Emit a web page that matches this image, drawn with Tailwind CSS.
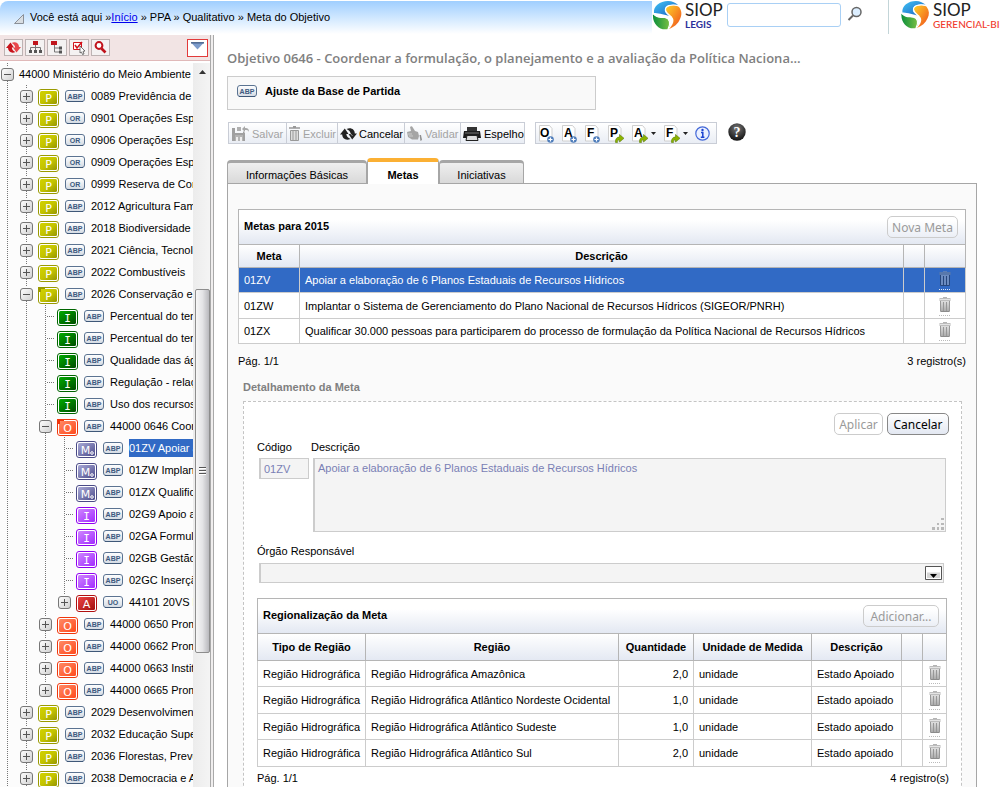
<!DOCTYPE html>
<html lang="pt-BR">
<head>
<meta charset="utf-8">
<title>SIOP - Meta do Objetivo</title>
<script src="https://cdn.jsdelivr.net/npm/@tailwindcss/browser@4"></script>
</head>
<body class="flex h-screen flex-col overflow-hidden bg-white font-['Liberation_Sans',Arial,sans-serif] text-[11px] leading-[14px] text-black">

<svg class="absolute size-0" aria-hidden="true">
  <defs>
    <linearGradient id="g-btn" x1="0" y1="0" x2="1" y2="1"><stop offset="0" stop-color="#fff"/><stop offset="1" stop-color="#cfcfcf"/></linearGradient>
    <linearGradient id="g-P" x1="0" y1="0" x2="1" y2="1"><stop offset="0" stop-color="#d2d200"/><stop offset=".5" stop-color="#c4c400"/><stop offset="1" stop-color="#969600"/></linearGradient>
    <linearGradient id="g-I" x1="0" y1="0" x2="1" y2="1"><stop offset="0" stop-color="#00ac00"/><stop offset="1" stop-color="#004c00"/></linearGradient>
    <linearGradient id="g-O" x1="0" y1="0" x2="1" y2="1"><stop offset="0" stop-color="#ff8a66"/><stop offset="1" stop-color="#ff4a1c"/></linearGradient>
    <linearGradient id="g-M" x1="0" y1="0" x2="1" y2="1"><stop offset="0" stop-color="#a9a9d6"/><stop offset="1" stop-color="#4d4d8c"/></linearGradient>
    <linearGradient id="g-V" x1="0" y1="0" x2="1" y2="1"><stop offset="0" stop-color="#cf86ff"/><stop offset="1" stop-color="#a12cff"/></linearGradient>
    <linearGradient id="g-A" x1="0" y1="0" x2="1" y2="1"><stop offset="0" stop-color="#ee4444"/><stop offset="1" stop-color="#a00d0d"/></linearGradient>
    <linearGradient id="g-badge" x1="0" y1="0" x2="0" y2="1"><stop offset="0" stop-color="#fff"/><stop offset="1" stop-color="#d3dae3"/></linearGradient>
    <linearGradient id="g-trash" x1="0" y1="0" x2="0" y2="1"><stop offset="0" stop-color="#dedede"/><stop offset="1" stop-color="#a6a6a6"/></linearGradient>
    <linearGradient id="g-blue" x1="0" y1="0" x2="1" y2="1"><stop offset="0" stop-color="#3fc3f5"/><stop offset="1" stop-color="#1b5fc0"/></linearGradient>
    <linearGradient id="g-green" x1="0" y1="0" x2="1" y2="0"><stop offset="0" stop-color="#0a8f3c"/><stop offset="1" stop-color="#7cc043"/></linearGradient>
    <linearGradient id="g-sun" x1="0" y1="0" x2="1" y2="1"><stop offset="0" stop-color="#ffd428"/><stop offset="1" stop-color="#ef4a1c"/></linearGradient>
    <radialGradient id="g-help" cx=".5" cy=".3" r=".7"><stop offset="0" stop-color="#777"/><stop offset="1" stop-color="#111"/></radialGradient>

    <symbol id="trash" viewBox="0 0 12 20">
      <path d="M4 1.500h4" stroke="#b4b4b4"/><path d="M0.500 2h11v3h-11z" fill="#bdbdbd"/><path d="M1 3.500h10" stroke="#e4e4e4"/>
      <path d="M1 5h10l-.5 11h-9z" fill="url(#g-trash)"/>
      <path d="M1.500 5v10.500M4.500 6v9M7.500 6v9M10.500 5v10.500" stroke="#979797"/><path d="M2 15.500h8" stroke="#8c8c8c"/>
      <path d="M0 19.500h12" stroke="#bbb" stroke-dasharray="1 1"/>
    </symbol>
    <symbol id="trash-sel" viewBox="0 0 12 20">
      <path d="M4 1.500h4" stroke="#5c7fb8"/><path d="M0.500 2h11v3h-11z" fill="#5878ab"/>
      <path d="M1 5h10l-.5 11h-9z" fill="#6c8cc0"/>
      <path d="M1.500 5v10.500M4.500 6v9M7.500 6v9M10.500 5v10.500M1.500 15.500h9" stroke="#27477d"/>
      <path d="M0 19.500h12" stroke="#dfe8f7" stroke-dasharray="1 1"/>
    </symbol>
    <symbol id="swirl" viewBox="0 0 30 30">
      <path d="M2 13C1 6 8 1 16 1c4 0 8 2 10 4-6-1-12 0-13 4-1 3 2 5 4 7-6-2-12-3-15-3z" fill="url(#g-blue)"/>
      <path d="M14 8c2-3 9-4 13-1 3 4 3 8 1 12-2 5-6 8-11 10 4-4 6-9 3-12-3-2-8-5-6-9z" fill="url(#g-sun)"/>
      <path d="M1 14c3 4 7 4 11 4 6 0 8 5 4 11C8 31 0 24 1 14z" fill="url(#g-green)"/>
      <path d="M26 5.500C19 4 13 6 13.500 10c.5 3 4 5 6 7" stroke="#fff" stroke-width="1.200" fill="none"/>
      <path d="M1 13.500c4 4 8 3 12 4 5 1 6 6 3 11.500" stroke="#fff" stroke-width="1.200" fill="none"/>
    </symbol>
    <symbol id="page" viewBox="0 0 16 19">
      <path d="M1.500 1.500h10l2.500 3v12.500h-12.500z" fill="#fff" stroke="#cfcfcf"/>
    </symbol>
    <symbol id="add" viewBox="0 0 7 7"><circle cx="3.500" cy="3.500" r="3.300" fill="#4d7cba"/><path d="M3.500 1.500v4M1.500 3.500h4" stroke="#fff" stroke-width="1.200"/></symbol>
    <symbol id="go" viewBox="0 0 9 9"><path d="M0.500 8.500C0 5 2 3 4.500 3V.5L9 4.300 4.500 8V6C3 6 2 6.500 2.500 8.500z" fill="#8cb400" stroke="#5f7f10" stroke-width=".6"/></symbol>
    <symbol id="badge" viewBox="0 0 20 12"><rect x=".5" y=".5" width="19" height="11" rx="2.500" fill="url(#g-badge)" stroke="#5b7391"/><path d="M2 11.500h16" stroke="#3f5878"/></symbol>
    <symbol id="badge-ABP" viewBox="0 0 20 12"><use href="#badge" width="20" height="12"/><text x="10" y="8.700" font-size="7" font-weight="bold" fill="#3d5a80" text-anchor="middle">ABP</text></symbol>
    <symbol id="badge-OR" viewBox="0 0 20 12"><use href="#badge" width="20" height="12"/><text x="10" y="8.700" font-size="7" font-weight="bold" fill="#3d5a80" text-anchor="middle">OR</text></symbol>
    <symbol id="badge-UO" viewBox="0 0 20 12"><use href="#badge" width="20" height="12"/><text x="10" y="8.700" font-size="7" font-weight="bold" fill="#3d5a80" text-anchor="middle">UO</text></symbol>
  </defs>
</svg>

<header class="flex h-[35px] shrink-0">
  <nav class="mt-px flex h-[33px] flex-1 items-center rounded-tl-lg bg-linear-to-b from-[#9fceff] to-white pb-[2px] pl-[14px]" aria-label="Você está aqui">
    <svg class="mt-1 mr-[6px] size-[10px]" viewBox="0 0 10 10"><path d="M.5 9.500L9.500.5v9z" fill="#d8dde2" stroke="#8b9098"/></svg>
    <span class="whitespace-pre">Você está aqui »<a href="#" class="text-[#0000ee] underline">Início</a> » PPA » Qualitativo » Meta do Objetivo</span>
  </nav>
  <div class="flex w-[351px] items-start">
    <svg class="size-[30px]" aria-hidden="true"><use href="#swirl"/></svg>
    <div class="ml-[3px] w-[42px] pt-px font-['Lato',sans-serif]">
      <p class="text-[17px] leading-[18px] text-[#222]">SIOP</p>
      <p class="text-[10px] leading-[10px] font-bold text-[#2a2f9b]">LEGIS</p>
    </div>
    <input type="text" aria-label="Pesquisar" class="mt-[3px] h-[24px] w-[114px] rounded-[3px] border border-[#a9d0f5] bg-white px-1">
    <button type="button" aria-label="Buscar" class="mt-[6px] ml-[6px]">
      <svg class="h-[17px] w-[16px]" viewBox="0 0 16 17"><circle cx="9.500" cy="6" r="4.500" fill="#dceeff" stroke="#666" stroke-width="1.500"/><path d="M6 9.500L1.500 14" stroke="#666" stroke-width="2"/></svg>
    </button>
    <div class="ml-[25px] h-[34px] w-px bg-[#c3d5d8]"></div>
    <svg class="ml-[11px] h-[29px] w-[30px]" aria-hidden="true"><use href="#swirl"/></svg>
    <div class="ml-[3px] pt-px font-['Lato',sans-serif]">
      <p class="text-[17px] leading-[18px] text-[#222]">SIOP</p>
      <p class="text-[10px] leading-[10px] font-medium whitespace-nowrap text-[#f03a2c]">GERENCIAL-BI</p>
    </div>
  </div>
</header>

<div class="flex min-h-0 flex-1">
  <aside class="flex w-[210px] shrink-0 flex-col">
    <div class="flex h-[26px] shrink-0 items-center gap-[2px] border-b border-[#e0b9b9] bg-[#f2e4e4] pr-[2px] pl-1">
      <button type="button" aria-label="Atualizar" class="flex h-[17px] w-[19px] items-center justify-center border border-[#bdb3b3] bg-[#f4f2f2]"><svg class="h-[13px] w-[15px]" viewBox="0 0 15 13"><path d="M0 7l4.500-5.500L8 6.500H5.800c.2 2 1.500 3.500 3.700 4.500-4 1.800-7.500-.5-7.500-4z" fill="#c8141c"/><path d="M15 6l-4.500 5.500L7 6.500h2.200C9 4.500 7.700 3 5.500 2 9.500.2 13 2.500 13 6z" fill="#e8474c"/></svg></button>
      <button type="button" aria-label="Expandir tudo" class="flex h-[17px] w-[20px] items-center justify-center border border-[#bdb3b3] bg-[#f4f2f2]"><svg class="h-[13px] w-[15px]" viewBox="0 0 15 13"><path d="M5 0h5v4H5z" fill="#c0141c"/><path d="M7.500 4v5M2.500 9V6.500h10V9" stroke="#777" fill="none"/><path d="M1 9h3v3H1zM6 9h3v3H6zM11 9h3v3h-3z" fill="#555"/></svg></button>
      <button type="button" aria-label="Recolher" class="flex h-[17px] w-[20px] items-center justify-center border border-[#bdb3b3] bg-[#f4f2f2]"><svg class="h-[13px] w-[15px]" viewBox="0 0 15 13"><path d="M1 0h6v4H1z" fill="#c0141c"/><path d="M4.500 4v7H9M4.500 7H9" stroke="#777" fill="none"/><path d="M9 5.500h3v3H9zM9 9.500h3v3H9z" fill="#555"/></svg></button>
      <button type="button" aria-label="Selecionar" class="flex h-[17px] w-[20px] items-center justify-center border border-[#bdb3b3] bg-[#f4f2f2]"><svg class="h-[14px] w-[15px]" viewBox="0 0 15 14"><path d="M1.500 1.500h8v7h-8z" fill="#fff" stroke="#d3141c"/><path d="M3 4l2 3 5-6" stroke="#d3141c" stroke-width="1.500" fill="none"/><path d="M8 5l5 5-2 .3 1 2.700-1.500.5-1-2.500L8 12z" fill="#fff" stroke="#555" stroke-width=".8"/></svg></button>
      <button type="button" aria-label="Procurar" class="flex h-[17px] w-[19px] items-center justify-center border border-[#bdb3b3] bg-[#f4f2f2]"><svg class="h-[13px] w-[13px]" viewBox="0 0 13 13"><circle cx="5" cy="4.500" r="3.400" fill="#fff" stroke="#c0141c" stroke-width="2"/><path d="M7.500 7.500l4 4" stroke="#c0141c" stroke-width="2.600"/></svg></button>
      <button type="button" aria-label="Opções" class="ml-auto flex h-[18px] w-[21px] items-center justify-center border border-[#e23a3a] bg-white"><svg class="mb-[3px] h-[8px] w-[13px]" viewBox="0 0 13 8"><path d="M.5 1h12L6.500 7.500z" fill="#7c9ccc"/><path d="M0 .8h13" stroke="#4b678f" stroke-width="1.500"/></svg></button>
    </div>
    <div class="mt-[2px] flex min-h-0 flex-1">
      <ul id="tree" class="w-[193px] shrink-0 overflow-hidden bg-[#fcfcfc]" aria-label="Estrutura do PPA"></ul>
      <div class="flex flex-1 flex-col items-center bg-linear-to-r from-[#ececec] to-[#f4f4f4] pl-px">
        <svg class="mt-[7px] h-[4px] w-[7px] shrink-0" viewBox="0 0 7 4"><path d="M3.500 0L7 4H0z" fill="#333"/></svg>
        <div class="mt-[215px] flex h-[364px] w-[15px] shrink-0 flex-col items-center justify-center gap-px rounded-[2px] border border-[#8d8d8d] bg-linear-to-r from-[#f7f7f7] via-[#e4e4e6] to-[#b9b9bd]">
          <div class="h-[2px] w-[7px] border-t border-[#555] bg-white"></div>
          <div class="h-[2px] w-[7px] border-t border-[#555] bg-white"></div>
          <div class="h-[2px] w-[7px] border-t border-[#555] bg-white"></div>
        </div>
      </div>
    </div>
  </aside>
  <div class="w-[4px] shrink-0 border-x border-[#a9a9a9] bg-[#f0eeee]"></div>

  <main class="flex min-w-0 flex-1 flex-col pr-[26px] pl-[13px]">
    <h1 class="mt-[15px] font-['Open_Sans',sans-serif] text-[13px] leading-4 font-semibold whitespace-nowrap text-[#808080]">Objetivo 0646 - Coordenar a formulação, o planejamento e a avaliação da Política Naciona...</h1>
    <div class="mt-[10px] flex h-[34px] w-[369px] shrink-0 items-center border border-[#ccc] bg-[#f9f9f9] pb-1 pl-[9px] font-bold">
      <svg class="h-[12px] w-[20px]"><use href="#badge-ABP"/></svg>
      <span class="ml-2">Ajuste da Base de Partida</span>
    </div>

    <div class="mt-[12px] flex h-[22px] shrink-0 items-center">
      <div class="ml-px flex h-[22px] w-[297px] divide-x divide-[#c9cdd6] border border-[#c9cdd6] bg-linear-to-b from-white to-[#e9edf4]">
        <button type="button" disabled class="flex w-[58px] items-center gap-[2px] pt-px pl-[3px] text-[#a3a3a3]"><svg class="h-[15px] w-[18px] shrink-0" viewBox="0 0 18 15"><path d="M0 2h3v5h8V5l2 2v8H0z" fill="#a0a0a0"/><path d="M3 9h8v6H3z" fill="#b4b4b4"/><path d="M4 11h2v4H4zM8 11h2v4H8z" fill="#eee"/><path d="M5 1h4v4H5z" fill="#b0b0b0"/><path d="M10 3l3-3v2c3 0 4 1 4 4-1-2-2-2-4-2v2z" fill="#a8a8a8"/></svg>Salvar</button>
        <button type="button" disabled class="flex w-[51px] items-center gap-[3px] pt-px pl-[2px] text-[#a3a3a3]"><svg class="h-[15px] w-[11px] shrink-0" viewBox="0 0 11 15"><path d="M4 .5h3M0 2h11" stroke="#999" stroke-width="1.500"/><path d="M1.500 4.500h8v10h-8z" fill="#ddd" stroke="#999"/><path d="M4 5v9M7 5v9" stroke="#999"/></svg>Excluir</button>
        <button type="button" class="flex w-[67px] items-center gap-[2px] pt-px pl-[2px]"><svg class="h-[14px] w-[17px] shrink-0" viewBox="0 0 17 14"><path d="M0 7.500l4.800-6 3.700 5.500H6.300c.2 2.200 1.700 3.900 4.200 5-4.500 2-8.300-.5-8.300-4.500z" fill="#222"/><path d="M17 6.500l-4.800 6L8.500 7h2.200C10.500 4.800 9 3.100 6.500 2 11 0 14.800 2.500 14.800 6.500z" fill="#222"/><path d="M9.500 6.800h1.300L12.500 9" stroke="#fff" stroke-width=".5" fill="none"/></svg>Cancelar</button>
        <button type="button" disabled class="flex w-[56px] items-center gap-[3px] pt-px pl-[2px] text-[#a3a3a3]"><svg class="h-[15px] w-[15px] shrink-0" viewBox="0 0 15 15"><path d="M0 6l4-1-1-4c1-1 2-1 2.500 0L8 5l3 1 1 4-1 3.500H5L1 11z" fill="#a5a5a5"/><path d="M1 8h4M2 10h4" stroke="#ccc"/><path d="M12.500 9h1.500l1 5-1.500 1z" fill="#8f8f8f"/></svg>Validar</button>
        <button type="button" class="flex flex-1 items-center gap-[3px] pt-px pl-[2px]"><svg class="h-[14px] w-[18px] shrink-0" viewBox="0 0 18 14"><path d="M4 0h10v4H4z" fill="#333"/><path d="M1 4h16l1 7H0z" fill="#1c1c1c"/><path d="M2 6h14" stroke="#777"/><path d="M4 8.500h10l1 5H3z" fill="#ddd" stroke="#222"/></svg>Espelho</button>
      </div>
      <div class="ml-[10px] flex h-[22px] w-[182px] items-center border border-[#c9cdd6] bg-linear-to-b from-white to-[#e9edf4] pl-[2px] text-[#111]">
        <button type="button" aria-label="Novo objetivo" class="mr-[7px]"><svg class="h-[19px] w-[16px]" viewBox="0 0 16 19"><use href="#page" width="16" height="19"/><text x="2" y="13" font-size="12" font-weight="bold">O</text><use href="#add" x="9" y="12" width="7" height="7"/></svg></button>
        <button type="button" aria-label="Nova ação" class="mr-[7px]"><svg class="h-[19px] w-[16px]" viewBox="0 0 16 19"><use href="#page" width="16" height="19"/><text x="3" y="13" font-size="12" font-weight="bold">A</text><use href="#add" x="9" y="12" width="7" height="7"/></svg></button>
        <button type="button" aria-label="Novo F" class="mr-[7px]"><svg class="h-[19px] w-[16px]" viewBox="0 0 16 19"><use href="#page" width="16" height="19"/><text x="3" y="13" font-size="12" font-weight="bold">F</text><use href="#add" x="9" y="12" width="7" height="7"/></svg></button>
        <button type="button" aria-label="Ir para P" class="mr-[7px]"><svg class="h-[19px] w-[17px]" viewBox="0 0 17 19"><use href="#page" width="16" height="19"/><text x="3" y="13" font-size="12" font-weight="bold">P</text><use href="#go" x="8" y="10" width="9" height="9"/></svg></button>
        <button type="button" aria-label="Ir para A" class="mr-[7px] flex items-center gap-[3px]"><svg class="h-[19px] w-[17px]" viewBox="0 0 17 19"><use href="#page" width="16" height="19"/><text x="3" y="13" font-size="12" font-weight="bold">A</text><use href="#go" x="8" y="10" width="9" height="9"/></svg><svg class="h-[3px] w-[5px]" viewBox="0 0 5 3"><path d="M0 0h5L2.500 3z" fill="#222"/></svg></button>
        <button type="button" aria-label="Ir para F" class="mr-[7px] flex items-center gap-[3px]"><svg class="h-[19px] w-[17px]" viewBox="0 0 17 19"><use href="#page" width="16" height="19"/><text x="3" y="13" font-size="12" font-weight="bold">F</text><use href="#go" x="8" y="10" width="9" height="9"/></svg><svg class="h-[3px] w-[5px]" viewBox="0 0 5 3"><path d="M0 0h5L2.500 3z" fill="#222"/></svg></button>
        <button type="button" aria-label="Informações"><svg class="size-[15px]" viewBox="0 0 15 15"><circle cx="7.500" cy="7.500" r="6.700" fill="#eaf0ff" stroke="#4468d8" stroke-width="1.200"/><circle cx="7.500" cy="4" r="1.200" fill="#1b43d1"/><path d="M6 6.500h1.800V11M5.800 11.300h3.600" stroke="#1b43d1" stroke-width="1.500" fill="none"/></svg></button>
      </div>
      <button type="button" aria-label="Ajuda" class="mb-[3px] ml-[11px]"><svg class="size-[18px]" viewBox="0 0 18 18"><circle cx="9" cy="9" r="8.700" fill="url(#g-help)"/><text x="9" y="13.500" font-size="14" font-weight="bold" fill="#fff" font-family="Liberation Serif" text-anchor="middle">?</text></svg></button>
    </div>

    <div class="z-10 mt-[14px] -mb-px flex h-[26px] shrink-0 items-end leading-4" role="tablist">
      <button type="button" role="tab" class="h-[24px] w-[140px] rounded-t-[4px] border border-t-[3px] border-[#a6a6a6] bg-linear-to-b from-[#efefef] to-[#d9d9d9] pt-1">Informações Básicas</button>
      <button type="button" role="tab" aria-selected="true" class="h-[26px] w-[72px] rounded-t-[4px] border border-t-4 border-b-0 border-[#a6a6a6] border-t-[#fbb034] bg-white pt-[3px] font-bold">Metas</button>
      <button type="button" role="tab" class="h-[24px] w-[85px] rounded-t-[4px] border border-t-[3px] border-[#a6a6a6] bg-linear-to-b from-[#efefef] to-[#d9d9d9] pt-1">Iniciativas</button>
    </div>

    <section class="min-h-0 flex-1 overflow-hidden border border-b-0 border-[#a6a6a6] bg-[#fafafa] px-[10px] pt-[25px]">
      <div class="flex h-[35px] items-center justify-between border border-b-0 border-[#b5b5b5] bg-linear-to-b from-white from-30% to-[#e3e8f2] pr-[7px] pl-[5px]">
        <h2 class="pb-[2px] font-bold">Metas para 2015</h2>
        <button type="button" disabled class="h-[22px] w-[71px] rounded-[5px] border border-[#ccc] pt-[2px] font-['Noto_Sans',sans-serif] text-[12px] text-[#9a9a9a]">Nova Meta</button>
      </div>
      <table class="w-full table-fixed border-collapse">
        <colgroup><col class="w-[61px]"><col><col class="w-[21px]"><col class="w-[41px]"></colgroup>
        <thead>
          <tr class="h-[23px] bg-linear-to-b from-white to-[#e3e8f2]">
            <th class="border border-[#b5b5b5]">Meta</th><th class="border border-[#b5b5b5]">Descrição</th><th class="border border-[#b5b5b5]"></th><th class="border border-[#b5b5b5]"></th>
          </tr>
        </thead>
        <tbody>
          <tr class="h-[25px] bg-[#316ac5] text-white"><td class="border border-[#ccc] px-[5px]">01ZV</td><td class="border border-[#ccc] px-[5px]">Apoiar a elaboração de 6 Planos Estaduais de Recursos Hídricos</td><td class="border border-[#ccc]"></td><td class="border border-[#ccc]"><button type="button" aria-label="Excluir 01ZV" class="mx-auto block"><svg class="h-[20px] w-[12px]"><use href="#trash-sel"/></svg></button></td></tr>
          <tr class="h-[26px] bg-white"><td class="border border-[#ccc] px-[5px]">01ZW</td><td class="border border-[#ccc] px-[5px]">Implantar o Sistema de Gerenciamento do Plano Nacional de Recursos Hídricos (SIGEOR/PNRH)</td><td class="border border-[#ccc]"></td><td class="border border-[#ccc]"><button type="button" aria-label="Excluir 01ZW" class="mx-auto block"><svg class="h-[20px] w-[12px]"><use href="#trash"/></svg></button></td></tr>
          <tr class="h-[25px] bg-white"><td class="border border-[#ccc] px-[5px]">01ZX</td><td class="border border-[#ccc] px-[5px]">Qualificar 30.000 pessoas para participarem do processo de formulação da Política Nacional de Recursos Hídricos</td><td class="border border-[#ccc]"></td><td class="border border-[#ccc]"><button type="button" aria-label="Excluir 01ZX" class="mx-auto block"><svg class="h-[20px] w-[12px]"><use href="#trash"/></svg></button></td></tr>
        </tbody>
      </table>
      <div class="mt-[10px] flex justify-between"><span>Pág. 1/1</span><span>3 registro(s)</span></div>

      <h2 class="mt-3 ml-[5px] font-bold text-[#808080]">Detalhamento da Meta</h2>
      <div class="mt-[7px] mr-1 ml-[5px] border border-dashed border-[#c4c4c4] bg-white px-[13px] pt-[11px] pb-10">
        <div class="-mr-px flex justify-end gap-1 font-['Noto_Sans',sans-serif] text-[12px]">
          <button type="button" disabled class="h-[22px] w-[49px] rounded-[5px] border border-[#ccc] pt-[2px] text-[#9a9a9a]">Aplicar</button>
          <button type="button" class="h-[22px] w-[62px] rounded-[5px] border border-[#888] bg-linear-to-b from-white to-[#e3e8f2] pt-[2px]">Cancelar</button>
        </div>
        <div class="mt-[5px] flex">
          <div class="w-[54px]">
            <label for="codigo" class="block">Código</label>
            <input id="codigo" type="text" disabled value="01ZV" class="mt-1 ml-[2px] h-[21px] w-[50px] border border-l-2 border-[#ccc] bg-[#f4f4f4] px-[3px] text-[#7a7fb5]">
          </div>
          <div class="flex-1">
            <label for="descricao" class="block">Descrição</label>
            <div class="relative mt-1 mr-[2px] ml-[2px]">
              <textarea id="descricao" disabled class="block h-[74px] w-full resize-none border border-l-2 border-[#ccc] bg-[#f4f4f4] px-[3px] pt-[2px] text-[#7a7fb5]">Apoiar a elaboração de 6 Planos Estaduais de Recursos Hídricos</textarea>
              <svg class="absolute right-[2px] bottom-[2px] size-[12px]" viewBox="0 0 12 12" fill="#b9b9b9"><path d="M9 0h3v2H9zM9 5h3v2H9zM9 9h3v3H9zM5 5h2v2H5zM5 9h2v3H5zM0 9h3v3H0z"/></svg>
            </div>
          </div>
        </div>
        <label for="orgao" class="mt-3 block">Órgão Responsável</label>
        <div class="relative mt-[5px] mr-1 ml-[2px]">
          <select id="orgao" disabled class="block h-[20px] w-full appearance-none border border-l-2 border-[#ccc] bg-[#f4f4f4]"></select>
          <svg class="pointer-events-none absolute top-[3px] right-[2px] h-[14px] w-[17px]" viewBox="0 0 17 14"><path d="M.5.5h16v13H.5z" fill="#fff" stroke="#555"/><path d="M2 6.500h13V12H2z" fill="#d5d5d5"/><path d="M5 8h7l-3.500 4z" fill="#000"/></svg>
        </div>

        <div class="mt-[15px] mr-px flex h-[35px] items-center justify-between border border-b-0 border-[#b5b5b5] bg-linear-to-b from-white from-30% to-[#e3e8f2] pr-[7px] pl-[5px]">
          <h2 class="pb-[2px] font-bold">Regionalização da Meta</h2>
          <button type="button" disabled class="h-[22px] w-[76px] rounded-[5px] border border-[#ccc] pt-[2px] font-['Noto_Sans',sans-serif] text-[12px] text-[#9a9a9a]">Adicionar...</button>
        </div>
        <div class="mr-px">
        <table class="w-full table-fixed border-collapse">
          <colgroup><col class="w-[108px]"><col><col class="w-[75px]"><col class="w-[118px]"><col class="w-[90px]"><col class="w-[21px]"><col class="w-[24px]"></colgroup>
          <thead>
            <tr class="h-[27px] bg-linear-to-b from-white to-[#e3e8f2]">
              <th class="border border-[#b5b5b5]">Tipo de Região</th><th class="border border-[#b5b5b5]">Região</th><th class="border border-[#b5b5b5]">Quantidade</th><th class="border border-[#b5b5b5]">Unidade de Medida</th><th class="border border-[#b5b5b5]">Descrição</th><th class="border border-[#b5b5b5]"></th><th class="border border-[#b5b5b5]"></th>
            </tr>
          </thead>
          <tbody id="regioes"></tbody>
        </table>
        </div>
        <div class="mt-1 -mr-px flex justify-between"><span>Pág. 1/1</span><span>4 registro(s)</span></div>
      </div>
    </section>
  </main>
</div>

<script>
  // Node types: [gradient, border colour, letter, letter font]
  const types = {
    P: ['g-P', '#9a9a00', 'P', 'DejaVu Sans'],
    I: ['g-I', '#006400', 'I', 'DejaVu Sans Mono'],
    O: ['g-O', '#f0370c', 'O', 'DejaVu Sans'],
    M: ['g-M', '#4a4a86', 'M', 'DejaVu Sans'],
    V: ['g-V', '#9000f0', 'I', 'DejaVu Sans Mono'],
    A: ['g-A', '#b01010', 'A', 'DejaVu Sans'],
  };
  // Guides per row: | vertical line, t branch to a leaf, + collapsed, - expanded, L last collapsed
  const rows = [
    ['-', '', '', '44000 Ministério do Meio Ambiente'],
    ['|+', 'P', 'ABP', '0089 Previdência de I'],
    ['|+', 'P', 'OR', '0901 Operações Esp'],
    ['|+', 'P', 'OR', '0906 Operações Esp'],
    ['|+', 'P', 'OR', '0909 Operações Esp'],
    ['|+', 'P', 'OR', '0999 Reserva de Con'],
    ['|+', 'P', 'ABP', '2012 Agricultura Fami'],
    ['|+', 'P', 'ABP', '2018 Biodiversidade'],
    ['|+', 'P', 'ABP', '2021 Ciência, Tecnolo'],
    ['|+', 'P', 'ABP', '2022 Combustíveis'],
    ['|-', 'P', 'ABP', '2026 Conservação e', 'open'],
    ['||t', 'I', 'ABP', 'Percentual do terr'],
    ['||t', 'I', 'ABP', 'Percentual do terr'],
    ['||t', 'I', 'ABP', 'Qualidade das águ'],
    ['||t', 'I', 'ABP', 'Regulação - relaç'],
    ['||t', 'I', 'ABP', 'Uso dos recursos'],
    ['||-', 'O', 'ABP', '44000 0646 Coor', 'open'],
    ['|||t', 'M', 'ABP', '01ZV Apoiar a', 'sel'],
    ['|||t', 'M', 'ABP', '01ZW Implant'],
    ['|||t', 'M', 'ABP', '01ZX Qualific'],
    ['|||t', 'V', 'ABP', '02G9 Apoio a'],
    ['|||t', 'V', 'ABP', '02GA Formul'],
    ['|||t', 'V', 'ABP', '02GB Gestão'],
    ['|||t', 'V', 'ABP', '02GC Inserçã'],
    ['|||L', 'A', 'UO', '44101 20VS F'],
    ['||+', 'O', 'ABP', '44000 0650 Prom'],
    ['||+', 'O', 'ABP', '44000 0662 Prom'],
    ['||+', 'O', 'ABP', '44000 0663 Institu'],
    ['||L', 'O', 'ABP', '44000 0665 Prom'],
    ['|+', 'P', 'ABP', '2029 Desenvolviment'],
    ['|+', 'P', 'ABP', '2032 Educação Supe'],
    ['|+', 'P', 'ABP', '2036 Florestas, Preve'],
    ['|+', 'P', 'ABP', '2038 Democracia e A'],
  ];
  const dots = 'stroke="#777" stroke-dasharray="1 1" fill="none"';
  function guide(kind, level) {
    const x = level ? 9.5 : 7.5;
    const cls = level ? 'block h-[22px] w-[19px]' : 'block h-[22px] w-[17px]';
    const svg = (body) => `<svg class="${cls}">${body}</svg>`;
    if (kind === '|') return svg(`<path d="M${x} 0v22" ${dots}/>`);
    if (kind === 't') return svg(`<path d="M${x} 0v22M${x + 1.5} 11.500h8" ${dots}/>`);
    const below = kind === 'L' ? '' : `M${x} 18v4`;
    const plus = kind === '-' ? '' : `M${x} 8v7`;
    return `<button type="button" aria-label="${kind === '-' ? 'Recolher' : 'Expandir'}">` + svg(
      `<path d="M${x} 0v4${below}" ${dots}/><rect x="${x - 6}" y="5.500" width="12" height="12" rx="2.500" fill="url(#g-btn)" stroke="#777"/><path d="M${x - 3.5} 11.500h7${plus}" stroke="#555" fill="none"/>`) + '</button>';
  }
  function icon(type, flag) {
    const [grad, border, letter, font] = types[type];
    const mark = flag === 'open' ? `<path d="M0 0h7v2H3v3H0z" fill="${border}"/>` : '';
    const sub = type === 'M' ? '<circle cx="16" cy="12" r="1.300" fill="none" stroke="#fff"/>' : '';
    return `<svg class="mt-[3px] ml-[2px] h-[17px] w-[21px] shrink-0" viewBox="0 0 21 17"><rect x=".5" y=".5" width="20" height="16" rx="2.500" fill="#fff" stroke="${border}"/><rect x="2" y="2" width="17" height="13" rx="1.500" fill="url(#${grad})"/>${mark}<text x="${type === 'M' ? 9.5 : 10.5}" y="12.500" font-size="11" font-family="${font}" fill="#fff" text-anchor="middle">${letter}</text>${sub}</svg>`;
  }
  document.getElementById('tree').innerHTML = rows.map(([guides, type, badge, label, flag]) =>
    `<li class="flex h-[22px] items-center whitespace-nowrap"><span class="flex shrink-0">${[...guides].map(guide).join('')}</span>${
      type ? icon(type, flag) + `<svg class="mx-[6px] h-[12px] w-[20px] shrink-0"><use href="#badge-${badge}"/></svg>` : '<span class="w-[2px]"></span>'
    }<span class="${flag === 'sel' ? 'bg-[#316ac5] py-[2px] text-white' : ''}">${label}</span></li>`).join('');

  const regioes = [
    ['Amazônica', '2,0', 'Estado Apoiado'],
    ['Atlântico Nordeste Ocidental', '1,0', 'Estado apoiado'],
    ['Atlântico Sudeste', '1,0', 'Estado apoiado'],
    ['Atlântico Sul', '2,0', 'Estado apoiado'],
  ];
  document.getElementById('regioes').innerHTML = regioes.map(([nome, qtd, desc], i) =>
    `<tr class="${i % 2 ? 'h-[27px]' : 'h-[26px]'} bg-white whitespace-nowrap">
      <td class="border border-[#ccc] px-[5px]">Região Hidrográfica</td>
      <td class="border border-[#ccc] px-[5px]">Região Hidrográfica ${nome}</td>
      <td class="border border-[#ccc] px-[5px] text-right">${qtd}</td>
      <td class="border border-[#ccc] px-[5px]">unidade</td>
      <td class="border border-[#ccc] px-[5px]">${desc}</td>
      <td class="border border-[#ccc]"></td>
      <td class="border border-[#ccc]"><button type="button" aria-label="Excluir ${nome}" class="mx-auto block"><svg class="h-[20px] w-[12px]"><use href="#trash"/></svg></button></td>
    </tr>`).join('');
</script>
</body>
</html>
